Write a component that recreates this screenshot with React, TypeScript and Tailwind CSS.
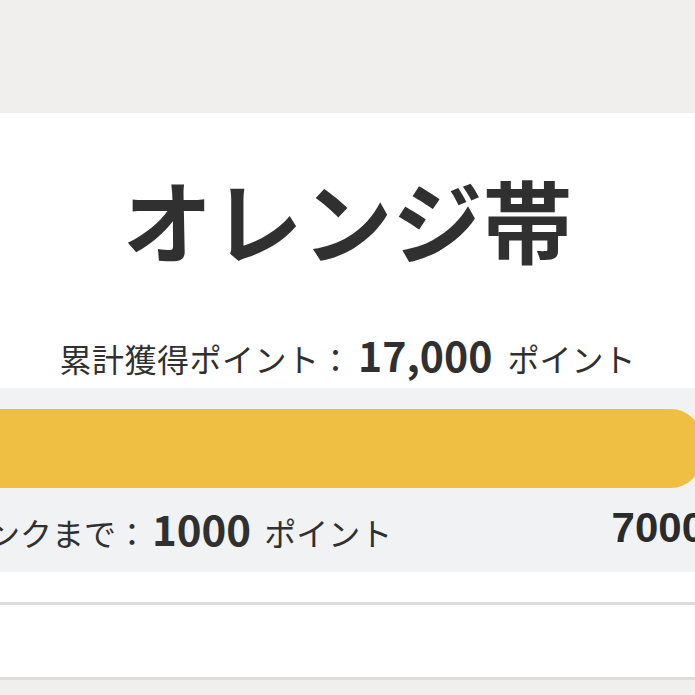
export default function App() {
  return (
    <main
      className="w-full h-[695px] overflow-hidden bg-[#f0efee] text-[#303030]"
      style={{ fontFamily: '"Noto Sans CJK JP", "Noto Sans", sans-serif' }}
    >
      <div className="h-[113px] bg-[#f0efee]" />

      {/* rank card */}
      <section className="h-[275px] bg-white flex flex-col">
        <div className="h-[210px] flex items-center justify-center">
          <h1 className="text-[90px] leading-none font-bold">オレンジ帯</h1>
        </div>
        <div className="h-[62px] flex items-center justify-center">
          <p className="flex items-baseline text-[32px] leading-none">
            <span className="tracking-[0.5px]">累計獲得ポイント：</span>
            <span className="text-[41px] font-bold ml-[6px] mr-[15px]">17,000</span>
            <span>ポイント</span>
          </p>
        </div>
      </section>

      {/* progress */}
      <section className="h-[184px] bg-[#f1f2f4] pt-[21px] flex flex-col">
        <div className="h-[79px] bg-[#efbf44] rounded-r-[30px] mr-[-6px] ml-[-20px]" />
        <div className="flex-1 flex items-center justify-between ml-[-108px] mr-[-10px] pb-[4px]">
          <p className="flex items-baseline text-[32px] leading-none">
            <span>次のランクまで：</span>
            <span className="text-[42px] font-bold ml-[4px] mr-[13px]">1000</span>
            <span>ポイント</span>
          </p>
          <span
            className="text-[42px] font-bold leading-none text-[#2b2b2b]"
            style={{ fontFamily: '"Liberation Sans", Arial, sans-serif' }}
          >
            7000
          </span>
        </div>
      </section>

      <div className="h-[30px] bg-white" />
      <div className="h-[75px] bg-white border-t-[3px] border-[#dcdcdc]" />
      <div className="h-[3px] bg-[#dcdcdc]" />
    </main>
  );
}
